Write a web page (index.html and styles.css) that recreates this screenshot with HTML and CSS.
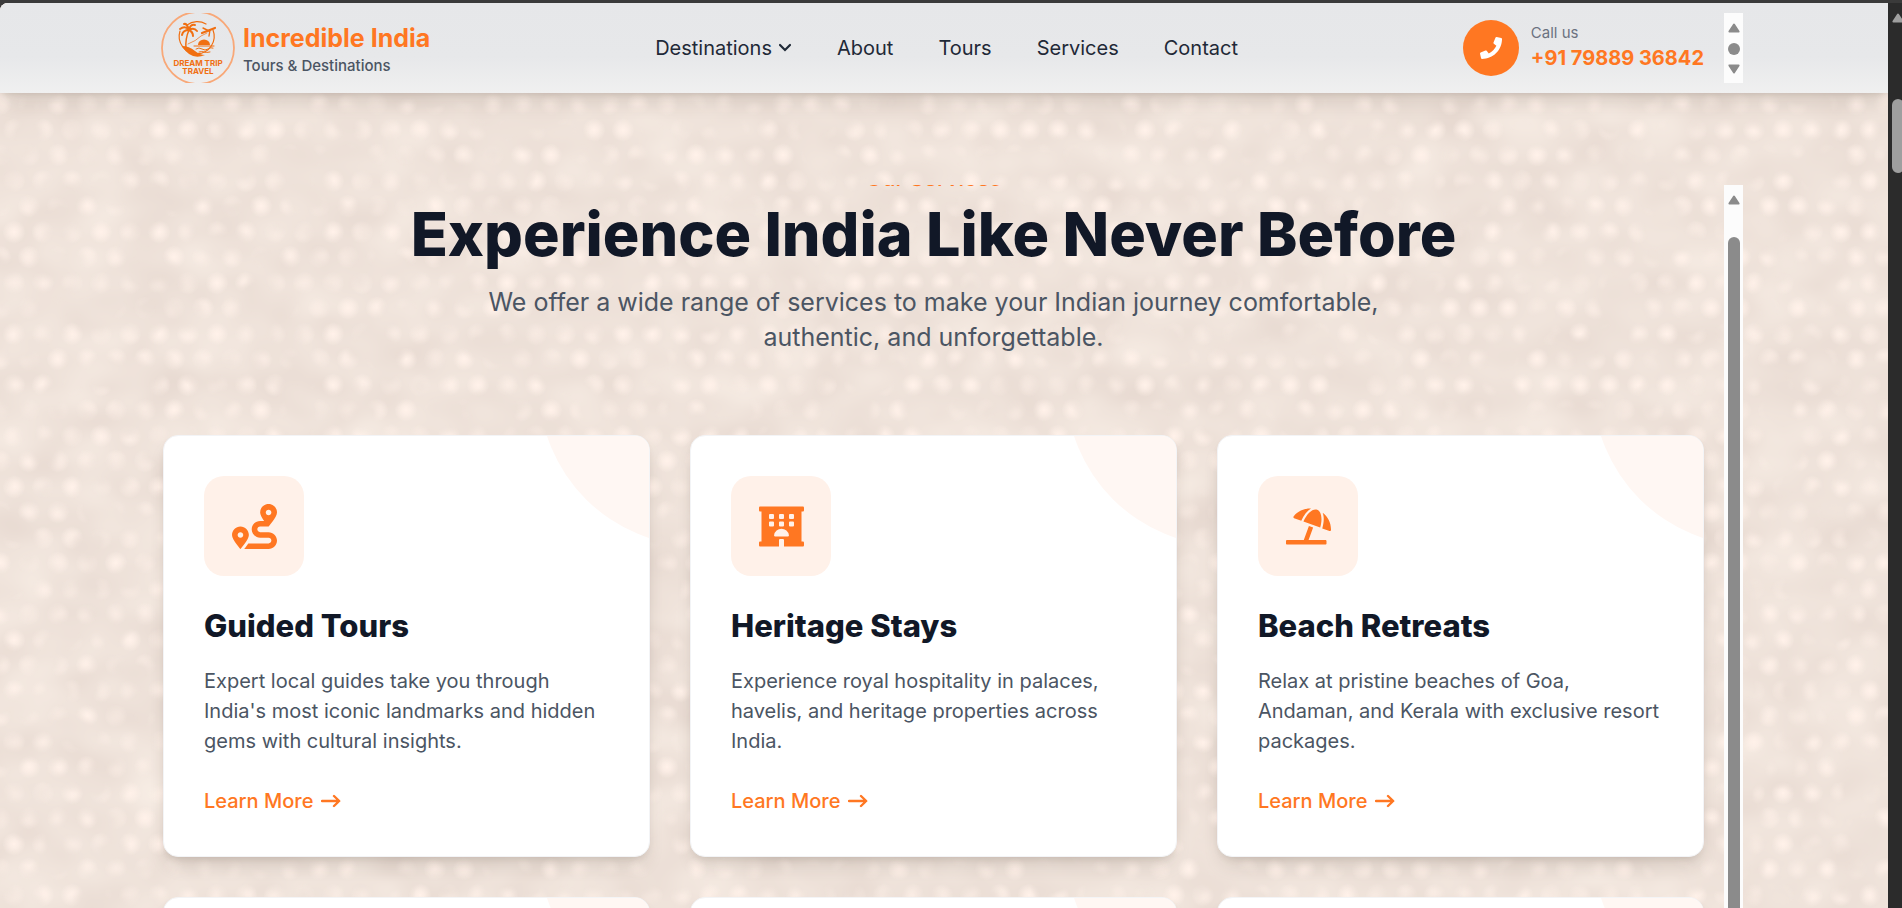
FILE: index.html
```html
<!DOCTYPE html>
<html lang="en">
<head>
<meta charset="utf-8">
<title>Incredible India</title>
<link rel="stylesheet" href="styles.css">
</head>
<body>
<svg class="sprites" aria-hidden="true">
  <symbol id="i-route" viewBox="0 0 512 512"><path d="M416 320h-96c-17.600 0-32-14.400-32-32s14.400-32 32-32h96s96-107 96-160-43-96-96-96-96 43-96 96c0 25.500 22.200 63.400 45.300 96H320c-52.900 0-96 43.100-96 96s43.100 96 96 96h96c17.600 0 32 14.400 32 32s-14.400 32-32 32H185.500c-16 24.800-33.800 47.700-47.300 64H416c52.900 0 96-43.100 96-96s-43.100-96-96-96zm0-256c17.700 0 32 14.300 32 32s-14.300 32-32 32-32-14.300-32-32 14.300-32 32-32zM96 256c-53 0-96 43-96 96s96 160 96 160 96-107 96-160-43-96-96-96zm0 128c-17.700 0-32-14.300-32-32s14.300-32 32-32 32 14.300 32 32-14.300 32-32 32z"/></symbol>
  <symbol id="i-hotel" viewBox="0 0 576 512"><path fill-rule="evenodd" d="M560 64c9 0 16-7 16-16V16c0-9-7-16-16-16H16C7 0 0 7 0 16v32c0 9 7 16 16 16h16v384H16c-9 0-16 7-16 16v32c0 9 7 16 16 16h240v-80c0-9 7-16 16-16h32c9 0 16 7 16 16v80h240c9 0 16-7 16-16v-32c0-9-7-16-16-16h-16V64zM141 96h38q13 0 13 13v38q0 13-13 13h-38q-13 0-13-13v-38q0-13 13-13zM269 96h38q13 0 13 13v38q0 13-13 13h-38q-13 0-13-13v-38q0-13 13-13zM397 96h38q13 0 13 13v38q0 13-13 13h-38q-13 0-13-13v-38q0-13 13-13zM141 192h38q13 0 13 13v38q0 13-13 13h-38q-13 0-13-13v-38q0-13 13-13zM269 192h38q13 0 13 13v38q0 13-13 13h-38q-13 0-13-13v-38q0-13 13-13zM397 192h38q13 0 13 13v38q0 13-13 13h-38q-13 0-13-13v-38q0-13 13-13zM208 384q-17 0-15-17a96 96 0 0 1 190 0q2 17-15 17z"/></symbol>
  <symbol id="i-beach" viewBox="0 0 640 512"><path d="M115.380 136.900l102.110 37.180c35.190-81.540 86.210-144.290 139-173.700-95.880-4.890-188.780 36.960-248.530 111.800-6.690 8.400-2.660 21.050 7.420 24.720zm132.250 48.160l238.480 86.830c35.760-121.380 18.700-231.660-42.630-253.980-7.400-2.700-15.130-4-23.090-4-58.020.01-128.270 69.170-172.760 171.150zM521.480 60.500c6.220 16.300 10.830 34.600 13.200 55.190 5.740 49.890-1.420 108.230-18.950 166.980l102.620 37.360c10.090 3.670 21.310-3.430 21.570-14.170 2.320-95.690-41.910-187.440-118.440-245.360zM560 447.980H321.060L386 269.500l-60.140-21.900-72.900 200.370H16c-8.840 0-16 7.160-16 16V496c0 8.840 7.160 16 16 16h544c8.840 0 16-7.160 16-16v-32.020c0-8.840-7.160-16-16-16z"/></symbol>
  <symbol id="i-arrow" viewBox="0 0 20 14"><path d="M1 7h17M13 2l5.200 5L13 12" fill="none" stroke="currentColor" stroke-width="2.400" stroke-linecap="round" stroke-linejoin="round"/></symbol>
  <symbol id="i-up" viewBox="0 0 12 10"><path d="M6 1.500 10.600 8.600H1.400z" fill="currentColor" stroke="currentColor" stroke-width="2" stroke-linejoin="round"/></symbol>
</svg>

<div class="window">
  <div class="page">
    <svg class="texture" aria-hidden="true">
      <filter id="linen" x="0" y="0" width="100%" height="100%" color-interpolation-filters="sRGB">
        <feTurbulence type="fractalNoise" baseFrequency="0.016 0.022" numOctaves="2" seed="11"/>
        <feColorMatrix values="0.05 0.04 0 0 0.891  0.06 0.05 0 0 0.833  0.06 0.05 0 0 0.800  0 0 0 0 1"/>
      </filter>
      <filter id="weave" x="0" y="0" width="100%" height="100%" color-interpolation-filters="sRGB">
        <feTurbulence type="fractalNoise" baseFrequency="0.025 0.028" numOctaves="2" seed="3"/>
        <feColorMatrix values="0 0 0 0 0  0 0 0 0 0  0 0 0 0 0  3.500 0 0 0 -1.250" result="m"/>
        <feComposite in="SourceGraphic" in2="m" operator="in"/>
      </filter>
      <radialGradient id="glow"><stop offset="0" stop-color="#fff1e9"/><stop offset=".35" stop-color="#fff1e9" stop-opacity=".75"/><stop offset="1" stop-color="#fff1e9" stop-opacity="0"/></radialGradient>
      <pattern id="dots" y="12" width="29" height="51" patternUnits="userSpaceOnUse">
        <circle cx="14" cy="13" r="12" fill="url(#glow)"/>
        <circle cx="0" cy="38" r="12" fill="url(#glow)"/>
        <circle cx="29" cy="38" r="12" fill="url(#glow)"/>
      </pattern>
      <rect width="100%" height="100%" filter="url(#linen)"/>
      <rect width="100%" height="100%" fill="url(#dots)" filter="url(#weave)"/>
    </svg>

    <header class="topbar">
      <div class="container topbar-box">
        <div class="topbar-row">
          <a class="brand" href="#">
            <svg class="brand-logo" viewBox="0 0 76 70" aria-hidden="true">
              <circle cx="37" cy="35" r="36" fill="none" stroke="#f8a878" stroke-width="1.800"/>
              <g fill="none" stroke="#f06f12" stroke-linecap="round">
                <path d="M26 12a17.500 17.500 0 0 1 19-1M52 17a17.500 17.500 0 1 1-33 1" stroke-width="1.200"/>
                <path d="M27 31q8-3 13-8l6-3" stroke-width=".7"/>
                <path d="M28 17q-4 9-3 19" stroke-width="1.500"/>
                <path d="M28 17q-4-5-9-1M28 17q-2-7-5-6M28 17q1-6 6-5M28 17q5-3 8 1M28 17q-6 0-7 5M28 17q4 2 4 6" stroke-width="2"/>
                <path d="M41 20 54 15" stroke-width="2.200"/>
                <path d="M48 18l-6-3M49 17l-1 6" stroke-width="1.400"/>
                <path d="M33 33h20M35 36q3-2 6 0t6 0 5-1M38 39q3-1 5 0t6 0" stroke-width="1"/>
              </g>
              <path d="M37 32a6 5.500 0 0 1 12 0zM21 33q7 0 13 5 5 4 10 4-14 6-23-9z" fill="#f06f12"/>
              <g class="brand-mark" text-anchor="middle"><text x="37" y="53">DREAM TRIP</text><text x="37" y="61">TRAVEL</text></g>
            </svg>
            <span class="brand-text"><span class="brand-name">Incredible India</span><span class="brand-sub">Tours &amp; Destinations</span></span>
          </a>
          <nav class="nav">
            <a class="nav-link" href="#">Destinations
              <svg class="chevron" viewBox="0 0 14 10" aria-hidden="true"><path d="M2 2l5 5 5-5" fill="none" stroke="currentColor" stroke-width="2.200" stroke-linecap="round"/></svg></a>
            <a class="nav-link" href="#">About</a>
            <a class="nav-link" href="#">Tours</a>
            <a class="nav-link" href="#">Services</a>
            <a class="nav-link" href="#">Contact</a>
          </nav>
          <a class="call" href="tel:+917988936842">
            <span class="call-disc"><svg class="call-icon" viewBox="0 0 512 512" aria-hidden="true"><path d="M493.400 24.600l-104-24c-11.300-2.600-22.900 3.300-27.500 13.900l-48 112c-4.200 9.800-1.400 21.300 6.900 28l60.600 49.600c-36 76.700-98.900 140.500-177.200 177.200l-49.600-60.600c-6.800-8.300-18.200-11.100-28-6.900l-112 48C3.900 366.500-2 378.100.6 389.400l24 104C27.100 504.200 36.700 512 48 512c256.100 0 464-207.500 464-464 0-11.200-7.700-20.900-18.600-23.400z"/></svg></span>
            <span class="call-text"><span class="call-label">Call us</span><span class="call-number">+91 79889 36842</span></span>
          </a>
        </div>
        <div class="scroller scroller-short" aria-hidden="true"><svg class="tip"><use href="#i-up"/></svg><span class="knob"></span><svg class="tip tip-down"><use href="#i-up"/></svg></div>
      </div>
    </header>

    <main class="container services">
      <div class="services-view">
        <div class="intro">
          <p class="eyebrow">Our Services</p>
          <h1 class="headline">Experience India Like Never Before</h1>
          <p class="lead">We offer a wide range of services to make your Indian journey comfortable, authentic, and unforgettable.</p>
        </div>
        <div class="cards">
          <article class="card">
            <span class="tile"><svg class="tile-icon" aria-hidden="true"><use href="#i-route"/></svg></span>
            <h2 class="card-title">Guided Tours</h2>
            <p class="card-copy">Expert local guides take you through India's most iconic landmarks and hidden gems with cultural insights.</p>
            <a class="more" href="#">Learn More <svg class="arrow" aria-hidden="true"><use href="#i-arrow"/></svg></a>
          </article>
          <article class="card">
            <span class="tile"><svg class="tile-icon" aria-hidden="true"><use href="#i-hotel"/></svg></span>
            <h2 class="card-title">Heritage Stays</h2>
            <p class="card-copy">Experience royal hospitality in palaces, havelis, and heritage properties across India.</p>
            <a class="more" href="#">Learn More <svg class="arrow" aria-hidden="true"><use href="#i-arrow"/></svg></a>
          </article>
          <article class="card">
            <span class="tile"><svg class="tile-icon" aria-hidden="true"><use href="#i-beach"/></svg></span>
            <h2 class="card-title">Beach Retreats</h2>
            <p class="card-copy">Relax at pristine beaches of Goa, Andaman, and Kerala with exclusive resort packages.</p>
            <a class="more" href="#">Learn More <svg class="arrow" aria-hidden="true"><use href="#i-arrow"/></svg></a>
          </article>
          <article class="card"></article>
          <article class="card"></article>
          <article class="card"></article>
        </div>
      </div>
      <div class="scroller" aria-hidden="true"><svg class="tip"><use href="#i-up"/></svg><span class="knob knob-long"></span></div>
    </main>
  </div>
  <div class="window-scroll" aria-hidden="true"><svg class="tip"><use href="#i-up"/></svg><span class="window-thumb"></span></div>
</div>
</body>
</html>
```
FILE: styles.css
```css
* { box-sizing: border-box; }

html, body { height: 100%; }

body {
  margin: 0;
  padding-top: 3px;
  overflow: hidden;
  background: #3a3a3a;
  color: #4b5563;
  font: 20px/30px Inter, "Open Sans", sans-serif;
}

h1, h2, p { margin: 0; }
a { color: inherit; text-decoration: none; }
svg { display: block; flex: none; }

.sprites { position: absolute; width: 0; height: 0; }

.window { display: flex; height: 100%; }

.page {
  position: relative;
  display: flex;
  flex-direction: column;
  flex: 1;
  min-width: 0;
  overflow: hidden;
  border-radius: 8px 0 0 0;
  background: #f1e4dc;
}

.texture {
  position: absolute;
  inset: 0;
  width: 100%;
  height: 100%;
}

.container {
  display: flex;
  width: 100%;
  max-width: 1600px;
  margin: 0 auto;
  padding-left: 20px;
  gap: 20px;
}

/* Header */
.topbar {
  position: relative;
  flex: none;
  padding: 10px 2px 10px 0;
  background: linear-gradient(#e6e7e9 0, #e7e8ea 60%, #f0f0f0 100%);
  box-shadow: 0 12px 18px -4px rgba(60, 40, 30, .14), 0 4px 6px -4px rgba(60, 40, 30, .14);
}

.topbar-row {
  display: flex;
  flex: 1;
  align-items: center;
  justify-content: space-between;
  height: 70px;
}

.brand { display: flex; align-items: center; gap: 4px; margin-left: -2px; }
.brand-logo { width: 76px; height: 70px; }
.brand-mark { font: 700 8px Inter, sans-serif; fill: #f06f12; }
.brand-text { display: flex; flex-direction: column; margin-left: 2px; padding-top: 2px; }
.brand-name { color: #ff7722; font-size: 25px; font-weight: 700; line-height: 34px; }
.brand-sub { font-size: 15px; font-weight: 500; line-height: 22px; }

.nav { display: flex; gap: 45px; color: #1f2937; }
.nav-link { display: flex; align-items: center; gap: 6px; }
.chevron { width: 14px; height: 10px; }

.call { display: flex; align-items: center; gap: 12px; }
.call-disc {
  display: grid;
  place-items: center;
  width: 56px;
  height: 56px;
  border-radius: 50%;
  background: #ff7722;
}
.call-icon { width: 22px; height: 22px; fill: #fff; }
.call-text { display: flex; flex-direction: column; }
.call-label { color: #6b7280; font-size: 15px; line-height: 20px; }
.call-number { color: #ff7722; font-weight: 700; }

/* Scroll tracks */
.scroller {
  display: flex;
  flex: none;
  flex-direction: column;
  align-items: center;
  width: 19px;
  padding-top: 10px;
  background: #fcfcfc;
}
.scroller-short { justify-content: space-between; padding-bottom: 9px; }
.tip { width: 12px; height: 10px; color: #8b8b8b; }
.tip-down { transform: rotate(180deg); }
.knob { width: 12px; height: 12px; border-radius: 6px; background: #8b8b8b; }
.knob-long { flex: 1; margin-top: 32px; border-radius: 6px 6px 0 0; }

.window-scroll {
  flex: none;
  width: 14px;
  padding: 10px 0 0 4px;
  overflow: hidden;
  background: #2b2b2b;
}
.window-scroll .tip { color: #9f9f9f; }
.window-thumb {
  display: block;
  width: 12px;
  height: 74px;
  margin-top: 76px;
  border-radius: 6px;
  background: #9f9f9f;
}

/* Services */
.services {
  position: relative;
  flex: 1;
  min-height: 0;
  padding-top: 92px;
  left: -1px;
}

.services-view {
  flex: 1;
  min-width: 0;
  margin: 0 -20px;
  padding: 0 20px;
  overflow: hidden;
}

.intro { text-align: center; }
.eyebrow {
  height: 19px;
  display: flex;
  align-items: flex-end;
  justify-content: center;
  margin-top: -20px;
  color: #ff7722;
  font-size: 22px;
  font-weight: 500;
  line-height: 12px;
}
.headline {
  margin-top: 20px;
  color: #111827;
  font-size: 61px;
  font-weight: 800;
  line-height: 60px;
}
.lead {
  max-width: 960px;
  margin: 21px auto 0;
  font-size: 25px;
  line-height: 35px;
}

.cards {
  display: grid;
  grid-template-columns: repeat(3, 1fr);
  gap: 40px;
  margin-top: 80px;
}

.card {
  position: relative;
  min-height: 422px;
  padding: 40px;
  overflow: hidden;
  border: 1px solid #f3f4f6;
  border-radius: 15px;
  background: #fff;
  box-shadow: 0 12px 18px -4px rgba(60, 40, 30, .14), 0 4px 8px -4px rgba(60, 40, 30, .14);
}
.card::before {
  content: "";
  position: absolute;
  top: -210px;
  right: -210px;
  width: 320px;
  height: 320px;
  border-radius: 50%;
  background: #fff7f3;
}

.tile {
  display: grid;
  place-items: center;
  width: 100px;
  height: 100px;
  border-radius: 20px;
  background: #fff1e9;
}
.tile-icon { width: 45px; height: 45px; fill: #ff7722; }

.card-title {
  margin-top: 30px;
  color: #111827;
  font-size: 31px;
  font-weight: 800;
  line-height: 40px;
}
.card-copy { margin: 20px 0 30px; }
.more {
  display: inline-flex;
  align-items: center;
  gap: 8px;
  color: #ff7722;
  font-weight: 500;
}
.arrow { width: 20px; height: 14px; }
```
